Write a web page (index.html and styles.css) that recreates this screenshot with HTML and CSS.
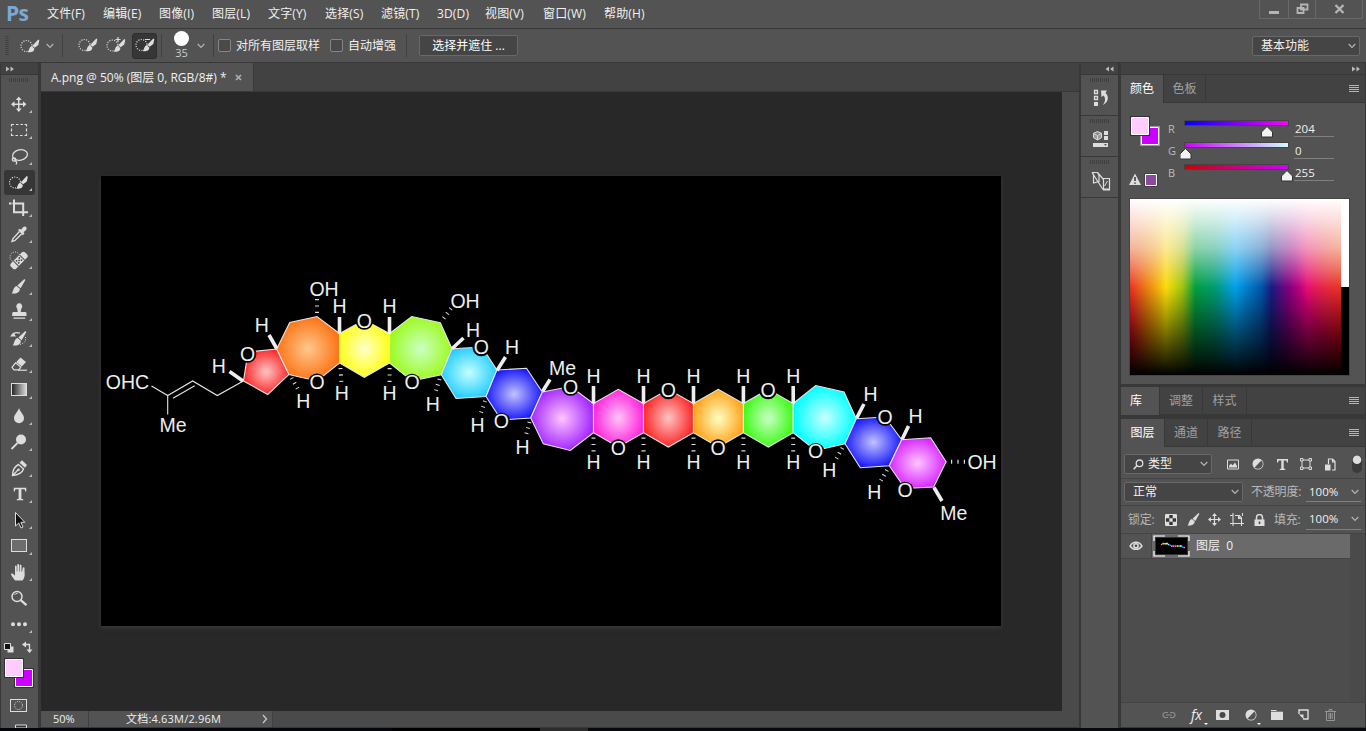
FILE: index.html
```html
<!DOCTYPE html>
<html lang="zh-CN">
<head>
<meta charset="utf-8">
<title>A.png</title>
<link rel="stylesheet" href="styles.css">
</head>
<body>
<svg class="defs" width="0" height="0">
  <defs>
    <symbol id="chev" viewBox="0 0 8 6"><path d="M.7 1 4 4.4 7.3 1" fill="none" stroke="#b4b4b4" stroke-width="1.200"/></symbol>
    <symbol id="burger" viewBox="0 0 10 8"><path d="M0 .5h10M0 2.500h10M0 4.500h10M0 6.500h10" stroke="#b4b4b4" stroke-width="1"/></symbol>
    <symbol id="grip" viewBox="0 0 20 4"><path d="M.5 0v4M2.5 0v4M4.5 0v4M6.500 0v4M8.500 0v4M10.500 0v4M12.500 0v4M14.500 0v4M16.500 0v4M18.500 0v4" stroke="#3f3f3f"/></symbol>
    <symbol id="brush" viewBox="0 0 11 12"><path d="M10.200 0 11 .8 7.200 7.300 4.600 5.200zM4 5.600l2.600 2.100c0 3-3 4.300-6.600 3.900C1.400 10.500 1 6.500 4 5.600z" fill="#ddd"/></symbol>
    <symbol id="qsel" viewBox="0 0 20 18"><circle cx="6.500" cy="9" r="5.500" fill="none" stroke="#ddd" stroke-width="1.200" stroke-dasharray="1.100 1.350"/><path d="M18.300 2.500l1 .8-1 4.700-3.700 2.800-2.200-2zM11.800 9.300l2.500 2.200c.2 3.300-3.300 3.800-6.500 3.800 1.600-1.800 1-5 4-6z" fill="#ddd"/></symbol>
    <symbol id="move" viewBox="0 0 16 16"><path d="M8 2v12M2 8h12" stroke="#ddd" stroke-width="1.500"/><path d="M8 0l3 3.600H5zM8 16l3-3.600H5zM0 8l3.600-3v6zM16 8l-3.600-3v6z" fill="#ddd"/></symbol>
    <symbol id="tee" viewBox="0 0 12 12"><path d="M0 0h12v3.700h-1.100L10.200 1.700H7.300v8.700l1.700.5V12H3v-1.100l1.700-.5V1.700H1.800L1.100 3.700H0z" fill="#ddd"/></symbol>
    <symbol id="half" viewBox="0 0 12 12"><circle cx="6" cy="6" r="5.500" fill="#ddd"/><path d="M9.400 2.600A4.800 4.800 0 0 1 2.600 9.400z" fill="#535353"/></symbol>
    <linearGradient id="gray"><stop stop-color="#222"/><stop offset="1" stop-color="#ddd"/></linearGradient>
    <linearGradient id="gr"><stop stop-color="#00f"/><stop offset="1" stop-color="#f0f"/></linearGradient>
    <linearGradient id="gg"><stop stop-color="#c0f"/><stop offset="1" stop-color="#ccffff"/></linearGradient>
    <linearGradient id="gb"><stop stop-color="#c00"/><stop offset="1" stop-color="#c0f"/></linearGradient>
    <radialGradient id="red"><stop stop-color="#ffc4c4"/><stop offset="1" stop-color="#fb2a2a"/></radialGradient>
    <radialGradient id="orange"><stop stop-color="#ffc78e"/><stop offset="1" stop-color="#fd7415"/></radialGradient>
    <radialGradient id="yellow"><stop stop-color="#ffffc8"/><stop offset="1" stop-color="#ffff1c"/></radialGradient>
    <radialGradient id="lime"><stop stop-color="#ccffc4"/><stop offset="1" stop-color="#9cfb20"/></radialGradient>
    <radialGradient id="sky"><stop stop-color="#c4ffff"/><stop offset="1" stop-color="#28ceff"/></radialGradient>
    <radialGradient id="blue"><stop stop-color="#c2c2ff"/><stop offset="1" stop-color="#1c1cfa"/></radialGradient>
    <radialGradient id="purple"><stop stop-color="#ffc4ff"/><stop offset="1" stop-color="#a428ff"/></radialGradient>
    <radialGradient id="pink"><stop stop-color="#ffc4fa"/><stop offset="1" stop-color="#ff28dc"/></radialGradient>
    <radialGradient id="amber"><stop stop-color="#ffffc4"/><stop offset="1" stop-color="#ffa41c"/></radialGradient>
    <radialGradient id="green"><stop stop-color="#c8ffc4"/><stop offset="1" stop-color="#42fa1c"/></radialGradient>
    <radialGradient id="cyan"><stop stop-color="#c8ffff"/><stop offset="1" stop-color="#0ff"/></radialGradient>
    <radialGradient id="magenta"><stop stop-color="#ffc4ff"/><stop offset="1" stop-color="#d828ff"/></radialGradient>
    <g id="rings" stroke="#e6e6e6" stroke-width="1.100">
      <path fill="url(#red)" d="M243.500 381 267.700 394.500 289 374.500 276.700 349 248 352z"/>
      <path fill="url(#orange)" d="M276.700 349 289.700 322.500 317 316.500 339.600 333.500V363L317 381 289 374.500z"/>
      <path fill="url(#yellow)" d="M339.600 333.500 364.300 320 389.600 333.500V363L364.300 377.300 339.600 363z"/>
      <path fill="url(#lime)" d="M389.600 333.500 411.700 316.500 440.300 322.700 452 348.700 441.300 374.700 412 381 389.600 363z"/>
      <path fill="url(#sky)" d="M452 348.700 482 347 496.900 370 486 396.500 456 398.500 441.300 374.700z"/>
      <path fill="url(#blue)" d="M496.900 370 526.500 368.300 542.300 392 530.700 418 501.300 420 486 396.500z"/>
      <path fill="url(#purple)" d="M542.300 392 570.500 386.500 593.500 403.500V432.700L570.300 450.500 543.300 443.900 530.700 418z"/>
      <path fill="url(#pink)" d="M593.500 403.500 618.300 389.300 643.500 403.500V432.700L618.300 447 593.500 432.700z"/>
      <path fill="url(#red)" d="M643.500 403.500 668.300 389.300 693.500 403.500V432.700L668.300 447 643.500 432.700z"/>
      <path fill="url(#amber)" d="M693.500 403.500 718.300 389.300 743.400 403.500V432.700L718.300 447 693.500 432.700z"/>
      <path fill="url(#green)" d="M743.400 403.500 768.300 389.300 793.200 403.500V432.700L768.300 447 743.400 432.700z"/>
      <path fill="url(#cyan)" d="M793.200 403.500 815.700 385.500 844 392 856.300 418.700 845 443.700 815.700 450.500 793.200 432.700z"/>
      <path fill="url(#blue)" d="M856.300 418.700 885 417 901.700 439.700 889.300 465.700 860.300 467.700 845 443.700z"/>
      <path fill="url(#magenta)" d="M901.700 439.700 930.700 437.700 946.100 461.700 933.700 487 905 488.500 889.300 465.700z"/>
    </g>
  </defs>
</svg>

<header class="menubar">
  <div class="logo">Ps</div>
  <nav class="menu"><span>文件(F)</span><span>编辑(E)</span><span>图像(I)</span><span>图层(L)</span><span>文字(Y)</span><span>选择(S)</span><span>滤镜(T)</span><span>3D(D)</span><span>视图(V)</span><span>窗口(W)</span><span>帮助(H)</span></nav>
  <div class="winctl">
    <span><svg width="12" height="12"><path d="M1 9h10v3H1z" fill="#b4b4b4"/></svg></span>
    <span><svg width="13" height="12"><path d="M5 1.500h6.500v5H5zM1.500 5h6v5h-6z" fill="#535353" stroke="#b4b4b4" stroke-width="1.800"/></svg></span>
    <span><svg width="11" height="10"><path d="M1.500 1l8 8m0-8l-8 8" stroke="#b4b4b4" stroke-width="2.400"/></svg></span>
  </div>
</header>

<div class="options">
  <svg class="vgrip" width="4" height="20"><path d="M2 0v20" stroke="#3f3f3f" stroke-width="3" stroke-dasharray="1 1"/></svg>
  <svg width="20" height="18"><use href="#qsel"/></svg>
  <svg class="chev mid" width="8" height="6"><use href="#chev"/></svg>
  <i class="sep"></i>
  <svg class="mode" width="20" height="18"><use href="#qsel" y="-1"/></svg>
  <svg class="mode" width="21" height="19"><use href="#qsel" width="20" height="19"/><path d="M9.500 3.500h5M12 1v5" stroke="#ddd" stroke-width="1.200"/></svg>
  <b class="on"><svg width="20" height="18"><use href="#qsel" y="-1"/><path d="M10 2.500h5" stroke="#ddd"/></svg></b>
  <i class="sep"></i>
  <div class="tip"><i></i><span>35</span></div>
  <svg class="chev mid" width="8" height="6"><use href="#chev"/></svg>
  <i class="sep"></i>
  <i class="check"></i><span>对所有图层取样</span>
  <i class="check"></i><span>自动增强</span>
  <i class="sep"></i>
  <button class="btn">选择并遮住 ...</button>
  <i></i>
  <div class="select"><span>基本功能</span><svg width="8" height="6"><use href="#chev"/></svg></div>
</div>

<main class="work">
  <aside class="tools">
    <div class="collapse"><svg width="9" height="6"><path d="M0 .5L3.500 3 0 5.500zM4.500 .5L8 3 4.500 5.500z" fill="#bbb"/></svg></div>
    <div class="gripbar"><svg width="20" height="4"><use href="#grip"/></svg></div>
    <div class="tool more"><svg viewBox="0 0 37 26"><use href="#move" x="10" y="4.500" width="15.500" height="15.500"/></svg></div>
    <div class="tool more"><svg viewBox="0 0 37 26"><path d="M10.500 8.500v-2h2.500M15 6.500h2.500M19.500 6.500H22M23.500 6.500h2v2M25.500 10.500v3M25.500 15.500v2h-2M21.500 17.500H19M17 17.500h-2.500M12.500 17.500h-2v-2M10.500 13.500v-3" fill="none" stroke="#ddd" stroke-width="1.200"/></svg></div>
    <div class="tool more"><svg viewBox="0 0 37 26"><g fill="none" stroke="#ddd" stroke-width="1.300"><ellipse cx="19" cy="11" rx="7.500" ry="5.200" transform="rotate(-12 19 11)"/><circle cx="13" cy="15.500" r="1.700"/><path d="M13.500 17c2.500-.5 2.500 2 1.500 3.500"/></g></svg></div>
    <div class="tool more active"><svg viewBox="0 0 37 26"><use href="#qsel" x="7.500" y="3.500" width="20" height="18"/></svg></div>
    <div class="tool more"><svg viewBox="0 0 37 26"><path d="M8 7.400h2.500M13 3.500v12.700h14M11.500 7.400h10.700V20" fill="none" stroke="#ddd" stroke-width="2"/></svg></div>
    <div class="tool more"><svg viewBox="0 0 37 26"><path d="M18.500 9.500l-6.500 7-1 3 3-1 6.800-6.700" fill="none" stroke="#ddd" stroke-width="1.400"/><path d="M17 8l1.700-1.300 1.300 1 2.300-2.600c2-1.800 4.500.7 2.800 2.800l-2.600 2.300 1 1.300-1.500 1.700z" fill="#ddd"/></svg></div>
    <div class="tool more"><svg viewBox="0 0 37 26"><circle cx="14" cy="9" r="5" fill="none" stroke="#ddd" stroke-dasharray="1 1.300"/><g transform="rotate(-45 18 12.500)"><rect x="8" y="8.800" width="20" height="7.400" rx="2.500" fill="#ddd"/><path d="M13.700 8.800v7.400M22.300 8.800v7.400" stroke="#535353"/><path d="M16 11h.1M20 11h.1M18 12.500h.1M16 14h.1M20 14h.1" stroke="#444" stroke-width="1.700" stroke-linecap="round"/></g></svg></div>
    <div class="tool more"><svg viewBox="0 0 37 26"><use href="#brush" x="10" y="5" width="15" height="15"/></svg></div>
    <div class="tool more"><svg viewBox="0 0 37 26"><path d="M15.500 7.500a3 3 0 1 1 5.500 0c-.8 1.500-1.200 2.500-1.200 4.500h4.700q1 0 1 1.500V16H11.200v-2.500q0-1.500 1-1.500h4.500c0-2-.4-3-1.200-4.500zM12.500 17.500h11.700v1.200H12.500z" fill="#ddd"/></svg></div>
    <div class="tool more"><svg viewBox="0 0 37 26"><use href="#brush" x="11.500" y="5" width="14" height="15"/><path d="M9 10.500l3.300-4 2.700 4z" fill="#ddd"/><path d="M12 8c3-2 5-1.500 7-.8" fill="none" stroke="#ddd" stroke-width="1.300"/><path d="M24.500 11c.5 3.500-.5 6.500-6 7.500" fill="none" stroke="#ddd" stroke-dasharray="1 1.400"/></svg></div>
    <div class="tool more"><svg viewBox="0 0 37 26"><path d="M19.500 5.500l5.500 4.600-4.200 4.500-5.500-4.500z" fill="#ddd"/><path d="M14.600 10.800l5.200 4.300-2 2.700H13l-2-2.500z" fill="none" stroke="#ddd" stroke-width="1.200"/><path d="M17 18.200h9" stroke="#ddd" stroke-width="1.200"/></svg></div>
    <div class="tool more"><svg viewBox="0 0 37 26"><rect x="10.500" y="5.500" width="15" height="12" fill="url(#gray)" stroke="#ddd"/></svg></div>
    <div class="tool more"><svg viewBox="0 0 37 26"><path d="M18 4c1.200 4 5 6.500 5 10.200a5 5 0 0 1-10 0c0-3.700 3.800-6.200 5-10.200z" fill="#ddd"/></svg></div>
    <div class="tool more"><svg viewBox="0 0 37 26"><circle cx="20" cy="9.500" r="5" fill="#ddd"/><path d="M16.500 13l-6 6" stroke="#ddd" stroke-width="1.800"/></svg></div>
    <div class="tool more"><svg viewBox="0 0 37 26"><path d="M11.500 19.500c0-5 1-8.500 6-11l5 4.500c-1.500 4.500-6 6-11 6.500zM12 19l5-5" fill="none" stroke="#ddd" stroke-width="1.400"/><circle cx="17.500" cy="13.800" r="1.300" fill="#ddd"/><path d="M18.500 6.800l2.500-2.500 5 4.700-2 2.800z" fill="#ddd"/></svg></div>
    <div class="tool more"><svg viewBox="0 0 37 26"><use href="#tee" x="12.500" y="5.500" width="13" height="13"/></svg></div>
    <div class="tool more"><svg viewBox="0 0 37 26"><path d="M14.500 4.500V18l3.200-3 2.300 5 2-1-2.200-4.700h4z" fill="#111" stroke="#ddd"/></svg></div>
    <div class="tool more"><svg viewBox="0 0 37 26"><rect x="10.500" y="5.500" width="15" height="12" fill="#6d6d6d" stroke="#ddd"/></svg></div>
    <div class="tool more"><svg viewBox="0 0 37 26"><path d="M14 20.500c-1-2-2.500-3-3.700-5.500-.8-1.500.8-2 1.700-1.200l2 2V6.500c0-1.300 1.700-1.300 1.700 0v5h.6V5c0-1.300 1.800-1.300 1.800 0v6.500h.6V5.700c0-1.300 1.800-1.300 1.800 0v6h.6l.6-3.700c.3-1.300 2-1 1.800.3-.3 4.200 1.500 8.200-2 12.200z" fill="#ddd"/></svg></div>
    <div class="tool"><svg viewBox="0 0 37 26"><circle cx="16" cy="10.500" r="5" fill="none" stroke="#ddd" stroke-width="1.500"/><path d="M13.500 9a3 3 0 0 1 3-1.500" fill="none" stroke="#ddd"/><path d="M19.700 14.200l5.800 5" stroke="#ddd" stroke-width="2.300"/></svg></div>
    <div class="tool more"><svg viewBox="0 0 37 26"><path d="M12 12.300h0M18 12.300h0M24 12.300h0" stroke="#ddd" stroke-width="4" stroke-linecap="round"/></svg></div>
    <svg class="inks" viewBox="1 638 37 90" width="37" height="90">
      <path d="M7.500 646.500h6v6h-6z" fill="#ddd"/><path d="M4.500 643.500h6v6h-6z" fill="#111" stroke="#ddd"/>
      <path d="M24 644.500h5.500V651" fill="none" stroke="#ddd" stroke-width="1.300"/><path d="M22 644.500l4-3v6zM29.500 653l-3-3.500h6z" fill="#ddd"/>
      <path d="M14 668h20v20H14z" fill="#333"/><path d="M15.500 669.500h17v17h-17z" fill="#c0f" stroke="#fff"/>
      <path d="M4 658h20v20H4z" fill="#333"/><path d="M5.500 659.500h17v17h-17z" fill="#fcf" stroke="#fff"/>
      <rect x="10.500" y="699.500" width="16" height="12" fill="none" stroke="#ddd"/><circle cx="18.500" cy="705.500" r="4" fill="none" stroke="#ddd" stroke-dasharray="1 1.100"/>
      <path d="M15.500 728v-3h11v3z" fill="#333" stroke="#ddd"/>
    </svg>
  </aside>

  <section class="doc">
    <div class="tabs"><div class="doctab"><span class="name">A.png @ 50% (图层 0, RGB/8#) *</span><svg width="7" height="7"><path d="M1 1l5 5M6 1L1 6" stroke="#b0b0b0" stroke-width="1.700"/></svg></div></div>
    <div class="stage">
      <div class="view">
        <svg class="image" viewBox="101 176 900 450" width="900" height="450">
          <g fill="none" stroke="#e6e6e6" stroke-width="1.100"><path d="M151.500 386l16.200 9.500 25-14.500 24.600 14.500 26-14.500M173 398.200l21.700-12.400M167.700 395.500v19"/></g>
          <use href="#rings"/>
          <g stroke="#eee" stroke-width="3.600">
            <path d="M229.500 371.500L243 381M269 335l7.700 13.500M339.500 317v17M389.500 317v17M463.500 338L452 348.700M505.500 357L497 370.500M550 379.500L542.500 391.500M593.500 386v17.500M643.500 386v17.500M693.500 386v17.500M743.400 386v17.500M793.200 386v17.500M864 404l-7.300 14M908.500 426l-6.500 13.500M934 487.500l8 13.500"/>
          </g>
          <g stroke="#ddd" stroke-width="4" stroke-dasharray="1.200 5.200">
            <path d="M317 299v15M340.500 368l1 16M389.600 368v16M593.500 437.500v16M643.500 437.500v16M693.500 437.500v16M743.400 437.500v16M793.200 437.500v16M951 461.700h15"/>
          </g>
          <g stroke="#ddd" stroke-width="4" stroke-dasharray="1 4.600">
            <path d="M451 308.500l-9 12M291.500 378l7 12M439.500 379l-4.500 15M485 401l-4.500 13M529.500 422l-4 15M842.500 448l-8 14M887 470l-8 14"/>
          </g>
          <g fill="#000"><circle cx="247.500" cy="354" r="8.800"/><circle cx="317" cy="382.300" r="8.800"/><circle cx="364.300" cy="321" r="8.800"/><circle cx="412" cy="382.500" r="8.800"/><circle cx="481.300" cy="347.500" r="8.800"/><circle cx="501.300" cy="421.500" r="8.800"/><circle cx="570.500" cy="387" r="8.800"/><circle cx="618.300" cy="448" r="8.800"/><circle cx="668.300" cy="390.500" r="8.800"/><circle cx="718" cy="448" r="8.800"/><circle cx="768" cy="390.500" r="8.800"/><circle cx="815.700" cy="451.700" r="8.800"/><circle cx="885" cy="417" r="8.800"/><circle cx="905" cy="490.500" r="8.800"/></g>
          <g class="atoms" transform="translate(0 -.5)">
            <text x="247.500" y="361">O</text><text x="317" y="389.300">O</text><text x="364.300" y="328">O</text><text x="412" y="389.500">O</text><text x="481.300" y="354.500">O</text><text x="501.300" y="428.500">O</text><text x="570.500" y="394">O</text><text x="618.300" y="455">O</text><text x="668.300" y="397.500">O</text><text x="718" y="455">O</text><text x="768" y="397.500">O</text><text x="815.700" y="458.700">O</text><text x="885" y="424">O</text><text x="905" y="497.500">O</text>
            <text x="127.500" y="389">OHC</text><text x="173" y="432.500">Me</text><text x="218.700" y="373">H</text><text x="261.700" y="332">H</text><text x="303.300" y="408">H</text><text x="324" y="296">OH</text><text x="339.500" y="313.500">H</text><text x="341.700" y="400">H</text><text x="389.500" y="313.500">H</text><text x="389.500" y="400">H</text><text x="465" y="308.500">OH</text><text x="473" y="337">H</text><text x="512" y="354">H</text><text x="432.700" y="411">H</text><text x="477.500" y="432.500">H</text><text x="522.500" y="454">H</text><text x="562.500" y="375.500">Me</text>
            <text x="593.500" y="383">H</text><text x="643.500" y="383">H</text><text x="693.500" y="383">H</text><text x="743.400" y="383">H</text><text x="793.200" y="383">H</text><text x="593.500" y="469.500">H</text><text x="643.500" y="469.500">H</text><text x="693.500" y="469.500">H</text><text x="743.400" y="469.500">H</text><text x="793.200" y="469.500">H</text>
            <text x="870.500" y="401">H</text><text x="915.500" y="423">H</text><text x="829.300" y="477">H</text><text x="874.300" y="499">H</text><text x="982" y="469.500">OH</text><text x="953.700" y="520.500">Me</text>
          </g>
        </svg>
      </div>
      <div class="vscroll"></div>
    </div>
    <footer class="status"><span>50%</span><span class="size">文档:4.63M/2.96M</span><div class="arrow"><svg width="6" height="10"><path d="M1 1l3.500 4L1 9" fill="none" stroke="#ccc" stroke-width="1.200"/></svg></div></footer>
  </section>

  <aside class="dock">
    <div class="collapse"><svg width="9" height="6"><path d="M4 .5L.5 3 4 5.500zM8.500 .5L5 3l3.500 2.500z" fill="#bbb"/></svg></div>
    <div class="cell"><svg width="20" height="4"><use href="#grip"/></svg><svg width="18" height="18"><path d="M2.500 1.500h3v3h-3zM2.500 7.500h3v3h-3z" fill="none" stroke="#ddd" stroke-width="1.300"/><path d="M2 13h4v4H2zM9 1.500h6L13.500 4c4.500 4 2 10-2.500 12 2-3 3-6 .7-9.500L9.500 8z" fill="#ddd"/></svg></div>
    <div class="cell"><svg width="20" height="4"><use href="#grip"/></svg><svg width="18" height="18"><path d="M5.500 1.500l4 1.800v4.400l-4 2.300-4-2.300V3.300zM2 3.700l3.500 1.600L9 3.700M5.500 5.500v4" fill="#999" stroke="#ddd"/><path d="M12 1h4v4h-4zM12 6h4v4h-4zM1 13h15v4H1z" fill="#ddd"/><path d="M12 14.200h3l-1.500 1.500z" fill="#333"/></svg></div>
    <div class="cell"><svg width="20" height="4"><use href="#grip"/></svg><svg width="20" height="20"><path d="M1 1.500h5.500l1.500 3v6l-5.500 1.500V2.500M1 1.500l10 15.500 1.500 2H19M6.500 1.500l6 7M12.500 18V7.500h6V18z" fill="none" stroke="#ddd" stroke-width="1.200"/><path d="M13.500 15l3-5" stroke="#ddd"/></svg></div>
    <div class="rest"></div>
  </aside>

  <aside class="panels">
    <div class="collapse right"><svg width="9" height="6"><path d="M0 .5L3.500 3 0 5.500zM4.500 .5L8 3 4.500 5.500z" fill="#bbb"/></svg></div>
    <section class="color">
      <div class="ptabs c"><span class="cur">颜色</span><span>色板</span><svg width="10" height="8"><use href="#burger"/></svg></div>
      <div class="mixer">
        <svg viewBox="1121 103 42 96" width="42" height="96">
          <path d="M1140 126h20v20h-20z" fill="#999"/><path d="M1141 127h18v18h-18z" fill="#222"/><path d="M1141.500 127.500h17v17h-17z" fill="#c0f" stroke="#fff"/>
          <path d="M1130 116h20v20h-20z" fill="#333"/><path d="M1131.500 117.500h17v17h-17z" fill="#fcf" stroke="#fff"/>
          <path d="M1135 173.500l6 11.500h-12z" fill="#ddd"/><path d="M1135 177v4M1135 182.500v1.300" stroke="#333" stroke-width="1.500"/>
          <path d="M1144.500 173.500h13v13h-13z" fill="#333"/><path d="M1145.500 174.500h11v11h-11z" fill="#8a4a9e" stroke="#fff"/>
        </svg>
        <div class="sliders">
          <div><label>R</label><svg width="113" height="22"><path d="M4 0h105v6H4z" fill="#444"/><path d="M5 1h103v4H5z" fill="url(#gr)"/><path d="M87 6.500l5.500 5.500v5h-11v-5z" fill="#f2f2f2" stroke="#333"/></svg><output>204</output></div>
          <div><label>G</label><svg width="113" height="22"><path d="M4 0h105v6H4z" fill="#444"/><path d="M5 1h103v4H5z" fill="url(#gg)"/><path d="M5.500 6.500L11 12v5H0v-5z" fill="#f2f2f2" stroke="#333"/></svg><output>0</output></div>
          <div><label>B</label><svg width="113" height="22"><path d="M4 0h105v6H4z" fill="#444"/><path d="M5 1h103v4H5z" fill="url(#gb)"/><path d="M107 6.500l5.500 5.500v5h-11v-5z" fill="#f2f2f2" stroke="#333"/></svg><output>255</output></div>
        </div>
      </div>
      <div class="ramp"><i class="hues"></i><i class="bw"></i></div>
    </section>
    <section class="library"><div class="ptabs l"><span class="cur">库</span><span>调整</span><span>样式</span><svg width="10" height="8"><use href="#burger"/></svg></div></section>
    <section class="layers">
      <div class="ptabs y"><span class="cur">图层</span><span>通道</span><span>路径</span><svg width="10" height="8"><use href="#burger"/></svg></div>
      <div class="row filter">
        <div class="select"><svg class="mag" width="11" height="11"><circle cx="6.500" cy="4.300" r="3.300" fill="none" stroke="#ddd" stroke-width="1.300"/><path d="M4 6.500L.7 10.300" stroke="#ddd" stroke-width="1.500"/></svg><span>类型</span><svg width="8" height="6"><use href="#chev"/></svg></div>
        <svg width="12" height="11"><path d="M.5 1h11v9H.5z" fill="none" stroke="#ddd"/><path d="M2 8.500V7l2-2.500 1.500 2L8 3.500 10 7v1.500z" fill="#ddd"/></svg>
        <svg width="12" height="12"><use href="#half"/></svg>
        <svg width="11" height="11"><use href="#tee" width="11" height="11"/></svg>
        <svg width="12" height="12"><path d="M2 2h8v8H2z" fill="none" stroke="#ddd"/><path d="M.5.500h2.500v2.500H.5zM9 .5h2.500v2.500H9zM.5 9h2.500v2.500H.5zM9 9h2.500v2.500H9z" fill="#535353" stroke="#ddd"/></svg>
        <svg width="12" height="13"><path d="M4.500 6V1h4l2.500 2.500V12H8M8.500 1v3H11" fill="none" stroke="#ddd" stroke-width="1.200"/><path d="M1 6.500h5.500v6H1z" fill="#ddd"/></svg>
        <svg class="toggle" width="10" height="18"><rect width="10" height="18" rx="5" fill="#3a3a3a"/><circle cx="5" cy="4.700" r="4.300" fill="#ddd"/></svg>
      </div>
      <div class="row blend">
        <div class="select"><span>正常</span><svg width="8" height="6"><use href="#chev"/></svg></div>
        <span class="dim">不透明度:</span><span class="num">100%<svg width="8" height="6"><use href="#chev"/></svg></span>
      </div>
      <div class="row lock">
        <span class="dim">锁定:</span>
        <svg width="12" height="12"><path d="M.5.500h11v11H.5z" fill="#333" stroke="#ddd"/><path d="M1 1h3.300v3.300H1zM7.700 1H11v3.300H7.700zM4.300 4.300h3.400v3.400H4.300zM1 7.700h3.300V11H1zM7.700 7.700H11V11H7.700z" fill="#ddd"/></svg>
        <svg width="13" height="13"><use href="#brush" width="13" height="13"/></svg>
        <svg width="13" height="13"><use href="#move" width="13" height="13"/></svg>
        <svg width="14" height="13"><path d="M0 2.500h3M3 0v13M0 10.500h14M11.500 8.500V13M5 2.500h4.500l2 2.500v5.500" fill="none" stroke="#ddd" stroke-width="1.100"/><path d="M8 2l4 4H8zM12 0h1v3h-1z" fill="#ddd"/></svg>
        <svg width="11" height="12"><path d="M2.500 6V3.500a3 3 0 0 1 6 0V6" fill="none" stroke="#ddd" stroke-width="1.500"/><path d="M.5 5.500h10V12H.5z" fill="#ddd"/><path d="M5.500 7.500v2.500" stroke="#444" stroke-width="1.500"/></svg>
        <span class="dim">填充:</span><span class="num">100%<svg width="8" height="6"><use href="#chev"/></svg></span>
      </div>
      <div class="list">
        <div class="layer">
          <span class="eye"><svg width="14" height="10"><path d="M1 5c3-5 9-5 12 0-3 4.500-9 4.500-12 0z" fill="none" stroke="#ddd" stroke-width="1.400"/><circle cx="7" cy="4.800" r="2.900" fill="#ddd"/><circle cx="7" cy="4.800" r="1.300" fill="#444"/></svg></span>
          <div class="sel">
            <svg width="37" height="22"><path d="M2.500 2.500h32v17h-32z" fill="#000" stroke="#333"/><path d="M1 6V1h11M25 1h11v5M36 16v5H25M12 21H1v-5" fill="none" stroke="#fff" stroke-width="1.200"/><svg x="3" y="2.500" width="31" height="16" viewBox="101 176 900 450"><use href="#rings"/></svg></svg>
            <span>图层&nbsp; 0</span>
          </div>
        </div>
      </div>
      <div class="actions">
        <svg width="14" height="8"><path d="M6 6.500H3.500a2.500 2.500 0 0 1 0-5H6M8 1.500h2.500a2.500 2.500 0 0 1 0 5H8M4 4h6" fill="none" stroke="#8c8c8c" stroke-width="1.200"/></svg>
        <span class="fx">fx</span>
        <svg width="13" height="10"><path d="M0 0h13v10H0z" fill="#ddd"/><circle cx="6.500" cy="5" r="3" fill="#484848"/></svg>
        <div class="adj"><svg width="12" height="12"><use href="#half"/></svg></div>
        <svg width="12" height="11"><path d="M0 1h5l1 1H12v9H0z" fill="#ddd"/><path d="M0 2.500h12" stroke="#535353" stroke-width=".7"/></svg>
        <svg width="11" height="11"><path d="M1 5V1h9v9H5" fill="none" stroke="#ddd" stroke-width="1.400"/><path d="M1 5.500h4.500V10z" fill="#ddd"/></svg>
        <svg width="11" height="12"><path d="M0 2.500h11M4 2V.5h3V2M1.500 3v8.500h8V3M4 4v6M5.500 4v6M7.200 4v6" fill="none" stroke="#959595"/></svg>
      </div>
    </section>
  </aside>
</main>
<div class="taskbar"></div>
</body>
</html>
```
FILE: styles.css
```css
* { box-sizing: border-box; }
body { margin: 0; width: 1366px; height: 731px; overflow: hidden; display: flex; flex-direction: column; background: #535353; color: #f0f0f0; font: 12px/16px "Open Sans", "Noto Sans CJK SC", sans-serif; }
svg { display: block; flex: none; }
i { font-style: normal; }
.defs { position: absolute; }

.menubar { height: 29px; flex: none; display: flex; border-bottom: 1px solid #383838; }
.logo { width: 47px; padding-left: 6px; font: bold 21px/26px "Open Sans", sans-serif; letter-spacing: -.6px; color: #7aa9d8; }
.menu { flex: 1; display: grid; grid-template-columns: 56px 56px 53px 56px 57px 56px 56px 48px 58px 61px 60px; line-height: 27px; white-space: nowrap; letter-spacing: .15px; }
.winctl { display: grid; grid-template-columns: 28px 27px 47px; height: 19px; margin-right: 3px; border: 1px solid #686868; border-top: 0; }
.winctl span { display: flex; justify-content: center; align-items: center; border-left: 1px solid #686868; }
.winctl span:first-child { border-left: 0; align-items: flex-start; padding-top: 2px; }

.options { height: 34px; flex: none; border-bottom: 1px solid #383838; display: grid; align-items: center; grid-template-columns: 20px 20px 19px 17px 28px 28px 29px 7px 23px 19px 8px 18px 94px 18px 58px 13px 99px 1fr 108px 6px; white-space: nowrap; }
.vgrip { margin-left: 5px; }
.mid { justify-self: center; }
.options .mid + .sep { margin-left: 3px; }
.mode { margin-left: 2px; }
.sep { width: 1px; height: 23px; background: #404040; }
.on { width: 25px; height: 26px; background: #363636; border: 1px solid #2e2e2e; border-radius: 3px; display: flex; align-items: center; justify-content: center; }
.tip { display: flex; flex-direction: column; align-items: center; height: 32px; width: 27px; padding-top: 1px; font-size: 11px; color: #ccc; line-height: 14px; }
.tip i { width: 15px; height: 15px; flex: none; border-radius: 50%; background: #fff; }
.check { width: 13px; height: 13px; border: 1px solid #858585; border-radius: 2px; background: #4a4a4a; }
.btn { height: 21px; padding: 0; background: #454545; border: 1px solid #686868; border-radius: 2px; color: #fff; font: inherit; }
.select { height: 20px; display: flex; align-items: center; background: #454545; border: 1px solid #686868; border-radius: 2px; padding: 0 3px 0 8px; }
.select span { flex: 1; }

.work { height: 665px; flex: none; display: flex; background: #383838; padding-left: 1px; }
.collapse { height: 12px; flex: none; background: #424242; border-bottom: 1px solid #383838; padding: 3px 5px; }
.tools { width: 37px; margin-right: 3px; background: #535353; overflow: hidden; }
.gripbar { height: 17px; padding: 3px 0 0 8px; }
.tool { height: 26px; position: relative; }
.tool svg { width: 37px; height: 26px; }
.more::after { content: ""; position: absolute; left: 28px; top: 18px; border-left: 3px solid transparent; border-bottom: 3px solid #bbb; }
.active svg { background: #363636; border-radius: 3px; clip-path: inset(0 3px 1px 3px round 3px); }

.doc { width: 1038px; display: flex; flex-direction: column; }
.tabs { height: 28px; background: #424242; margin-bottom: 1px; display: flex; }
.doctab { width: 213px; background: #535353; border-right: 1px solid #383838; display: flex; align-items: center; padding-left: 10px; }
.name { width: 184px; padding-top: 1px; white-space: nowrap; }
.stage { flex: 1; display: flex; }
.view { width: 1021px; background: #282828; padding: 84px 0 0 60px; }
.image { background: #000; box-shadow: 0 2px 4px #3a3a3a; }
.atoms { font: 19.500px "Liberation Sans", sans-serif; fill: #eee; text-anchor: middle; }
.vscroll { flex: 1; background: #4a4a4a; }
.status { height: 17px; background: #4a4a4a; border-bottom: 1px solid #383838; display: grid; grid-template-columns: 48px 173px 11px; align-items: center; font-size: 11px; line-height: 16px; }
.status span:first-child { padding-left: 12px; background: #535353; border-right: 1px solid #404040; }
.status .size { background: #535353; padding-left: 37px; letter-spacing: .2px; }
.arrow { height: 16px; background: #535353; border-right: 1px solid #404040; display: flex; align-items: center; }

.dock { width: 37px; margin: 0 3px 0 2px; display: flex; flex-direction: column; }
.dock .collapse { padding-left: 24px; }
.cell { height: 40px; margin-bottom: 1px; background: #535353; padding: 3px 0 0 9px; display: flex; flex-direction: column; gap: 7px; }
.cell svg + svg { margin-left: 2px; }
.cell:nth-child(4) svg + svg { margin-left: 1px; }
.rest { flex: 1; background: #535353; }

.panels { width: 244px; display: flex; flex-direction: column; }
.right { padding-left: 231px; }
.color { height: 309px; background: #535353; margin-bottom: 3px; }
.ptabs { height: 28px; display: grid; background: #424242; border-bottom: 1px solid #383838; align-items: center; }
.ptabs span { height: 28px; line-height: 27px; text-align: center; border-right: 1px solid #383838; color: #a0a0a0; }
.ptabs .cur { background: #535353; color: #fff; }
.c { grid-template-columns: 43px 42px 153px; }
.c svg, .l svg, .y svg { justify-self: end; }
.l { grid-template-columns: 39px 43px 44px 112px; }
.l .cur { text-align: left; padding-left: 9px; }
.y { grid-template-columns: 44px 43px 44px 107px; }
.mixer { display: flex; height: 95px; }
.sliders { padding: 18px 0 0 5px; }
.sliders div { display: grid; grid-template-columns: 12px 114px 40px; height: 22px; }
.sliders label { font-size: 11px; color: #bbb; line-height: 16px; }
.sliders svg { margin-top: -1px; }
.sliders output { height: 16px; border-bottom: 1px solid #808080; line-height: 15px; font-size: 11.500px; padding-left: 1px; }
.ramp { display: flex; width: 221px; height: 178px; margin-left: 8px; border: 1px solid #444; }
.hues { width: 211px; background: linear-gradient(#fff, rgba(255,255,255,.82) 12%, rgba(255,255,255,.54) 28%, rgba(255,255,255,.2) 42%, transparent 50%, rgba(0,0,0,.2) 60%, rgba(0,0,0,.5) 75%, rgba(0,0,0,.85) 93%, #000), radial-gradient(ellipse 30% 60% at 0 22%, rgba(235,135,50,.7), transparent), radial-gradient(ellipse 22% 60% at 100% 22%, rgba(235,135,50,.7), transparent), linear-gradient(90deg, #e8001c, #f08a00 9%, #fff000 17%, #9cc410 25%, #00a040 31%, #009c74 40%, #00a0ea 50%, #0058ac 62%, #1b1a84 67%, #80007e 75%, #e6007e 84%, #e8001c); }
.bw { width: 8px; background: linear-gradient(#fff 50%, #000 50%); }
.library { height: 28px; margin-bottom: 4px; }
.layers { flex: 1; background: #535353; display: flex; flex-direction: column; }
.row { display: grid; align-items: center; border-bottom: 1px solid #444; white-space: nowrap; }
.dim { color: #b8b8b8; letter-spacing: -.2px; }
.filter { height: 32px; padding-left: 3px; grid-template-columns: 103px 25px 25px 23px 24px 28px 10px; padding-top: 3px; }
.filter .select { width: 88px; }
.mag { margin-right: 4px; }
.blend { height: 27px; padding-left: 3px; grid-template-columns: 127px 55px 55px; }
.blend .select { width: 119px; }
.num { height: 20px; line-height: 20px; border-bottom: 1px solid #808080; display: flex; align-items: center; justify-content: space-between; padding: 0 2px 0 3px; font-size: 11.500px; }
.lock { height: 28px; padding-left: 7px; grid-template-columns: 37px 22px 21px 22px 24px 20px 32px 55px; }
.list { flex: 1; background: #4d4d4d; border-right: 15px solid #4a4a4a; }
.layer { height: 25px; display: flex; border-bottom: 1px solid #444; }
.eye { width: 31px; background: #535353; border-right: 1px solid #444; display: flex; align-items: center; justify-content: center; }
.sel { flex: 1; background: #6a6a6a; display: flex; align-items: center; gap: 6px; padding-left: 1px; }
.actions { height: 26px; border-top: 1px solid #444; border-bottom: 1px solid #383838; display: grid; align-items: center; grid-template-columns: 28px 26px 29px 26px 27px 27px 11px; padding: 0 0 1px 41px; }
.fx, .adj { position: relative; }
.fx { font: italic 14px/20px "Open Sans", sans-serif; margin-left: 1px; }
.fx::after, .adj::after { content: ""; position: absolute; left: 13px; top: 18px; border: 2px solid transparent; border-top-color: #fff; border-bottom: 0; }
.adj::after { left: 12px; top: 14px; }
.taskbar { height: 3px; background: linear-gradient(90deg, #05060c 392px, #000 392px, #000 540px, #2c2c2c 540px, #2c2c2c 588px, #08090c 588px); }
```
